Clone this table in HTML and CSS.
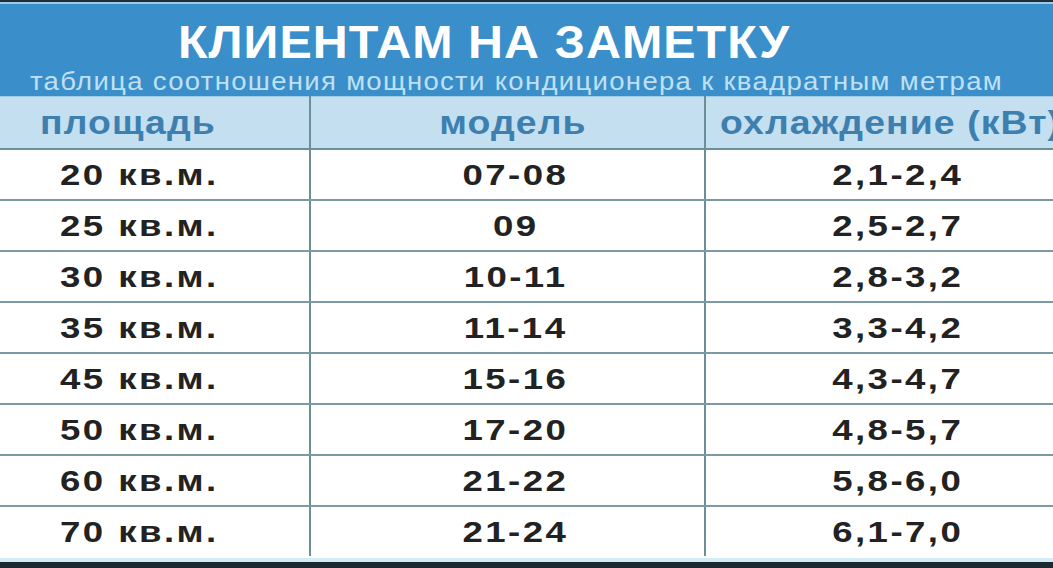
FILE: index.html
```html
<!DOCTYPE html>
<html lang="ru">
<head>
<meta charset="utf-8">
<link rel="stylesheet" href="styles.css">
</head>
<body>
<div class="page">
  <div class="top-edge"></div>
  <header class="banner">
    <h1 class="title"><span class="wide">КЛИЕНТАМ НА ЗАМЕТКУ</span></h1>
    <p class="subtitle"><span class="wide">таблица соотношения мощности кондиционера к квадратным метрам</span></p>
  </header>
  <table class="grid">
    <colgroup>
      <col class="c1"><col class="c2"><col class="c3">
    </colgroup>
    <thead>
      <tr>
        <th class="h-area"><span class="wide">площадь</span></th>
        <th class="h-model"><span class="wide">модель</span></th>
        <th class="h-cool"><span class="wide">охлаждение (кВт)</span></th>
      </tr>
    </thead>
    <tbody>
      <tr><td class="area"><span class="wide">20 кв.м.</span></td><td class="model"><span class="wide">07-08</span></td><td class="cool"><span class="wide">2,1-2,4</span></td></tr>
      <tr><td class="area"><span class="wide">25 кв.м.</span></td><td class="model"><span class="wide">09</span></td><td class="cool"><span class="wide">2,5-2,7</span></td></tr>
      <tr><td class="area"><span class="wide">30 кв.м.</span></td><td class="model"><span class="wide">10-11</span></td><td class="cool"><span class="wide">2,8-3,2</span></td></tr>
      <tr><td class="area"><span class="wide">35 кв.м.</span></td><td class="model"><span class="wide">11-14</span></td><td class="cool"><span class="wide">3,3-4,2</span></td></tr>
      <tr><td class="area"><span class="wide">45 кв.м.</span></td><td class="model"><span class="wide">15-16</span></td><td class="cool"><span class="wide">4,3-4,7</span></td></tr>
      <tr><td class="area"><span class="wide">50 кв.м.</span></td><td class="model"><span class="wide">17-20</span></td><td class="cool"><span class="wide">4,8-5,7</span></td></tr>
      <tr><td class="area"><span class="wide">60 кв.м.</span></td><td class="model"><span class="wide">21-22</span></td><td class="cool"><span class="wide">5,8-6,0</span></td></tr>
      <tr><td class="area"><span class="wide">70 кв.м.</span></td><td class="model"><span class="wide">21-24</span></td><td class="cool"><span class="wide">6,1-7,0</span></td></tr>
    </tbody>
  </table>
  <div class="bottom-edge"></div>
</div>
</body>
</html>
```
FILE: styles.css
```css
html, body {
  margin: 0;
  padding: 0;
  background: #ffffff;
}
.page {
  width: 1053px;
  height: 568px;
  overflow: hidden;
  font-family: "Liberation Sans", Arial, sans-serif;
  display: flex;
  flex-direction: column;
}
.wide {
  display: inline-block;
  transform-origin: left center;
}
.top-edge {
  height: 2px;
  background: #1d2f38;
  border-bottom: 2px solid #9fcbe4;
  flex: none;
}
.banner {
  flex: none;
  height: 92px;
  background: #3a8fca;
  box-sizing: border-box;
  padding-top: 13px;
}
.title {
  margin: 0;
  padding-left: 178px;
  font-size: 47px;
  line-height: 50px;
  font-weight: 700;
  color: #ffffff;
  white-space: nowrap;
}
.title .wide {
  letter-spacing: 1px;
  transform: scaleX(1.03);
}
.subtitle {
  margin: 0;
  padding-left: 30px;
  font-size: 25px;
  line-height: 28px;
  color: #bfe0f4;
  white-space: nowrap;
}
.subtitle .wide {
  letter-spacing: 1.2px;
  transform: scaleX(1.1);
}
.grid {
  flex: none;
  width: 1090px;
  border-collapse: collapse;
  table-layout: fixed;
}
.c1 { width: 310px; }
.c2 { width: 395px; }
.c3 { width: 385px; }
.grid th {
  height: 51px;
  padding: 0;
  background: #c3dff0;
  color: #3d80b0;
  font-size: 34px;
  font-weight: 700;
  white-space: nowrap;
  border-bottom: 2px solid #6b8e99;
  border-top: 1px solid #9fcbe4;
}
.grid th .wide {
  letter-spacing: 1px;
  transform: scaleX(1.1);
}
.grid th + th, .grid td + td {
  border-left: 2px solid #6b8e99;
}
.grid td {
  height: 49px;
  padding: 0;
  color: #222222;
  font-size: 30px;
  font-weight: 700;
  white-space: nowrap;
  border-bottom: 2px solid #7b9aa3;
}
.grid td .wide {
  letter-spacing: 2px;
  transform: scaleX(1.22);
}
.grid tbody tr:last-child td {
  border-bottom: none;
}
.h-area { text-align: left; padding-left: 40px !important; }
.h-model { text-align: center; padding-left: 12px !important; }
.h-cool { text-align: left; padding-left: 14px !important; }
.area { text-align: left; padding-left: 60px !important; }
.model { text-align: center; padding-left: 16px !important; }
.cool { text-align: center; }
.grid .h-model .wide,
.grid .model .wide,
.grid .cool .wide {
  transform-origin: center center;
}
.bottom-edge {
  flex: none;
  height: 4px;
  background: #d3ecf5;
  border-bottom: 6px solid #1a2a30;
  margin-top: auto;
}
```
